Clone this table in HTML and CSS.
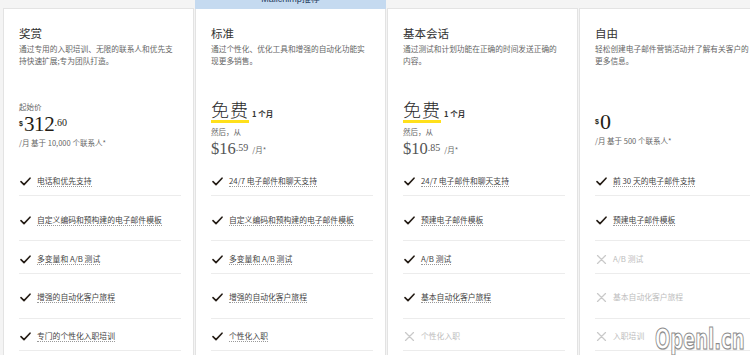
FILE: index.html
```html
<!DOCTYPE html>
<html lang="zh">
<head>
<meta charset="utf-8">
<title>Pricing</title>
<link rel="stylesheet" href="styles.css">
</head>
<body>
<div class="plans">
  <section class="plan">
    <div class="head">
      <h2 class="title">奖赏</h2>
      <p class="desc">通过专用的入职培训、无限的联系人和优先支持快速扩展;专为团队打造。</p>
    </div>
    <div class="price price--paid">
      <div class="small">起始价</div>
      <div class="amount"><span class="cur">$</span><span class="big">312</span><span class="cents">.60</span></div>
      <div class="note">/月 基于 10,000 个联系人*</div>
    </div>
    <ul class="features">
      <li class="on"><svg class="ico" viewBox="0 0 11 9"><path d="M1 4.6 L4 7.6 L10 1.2"/></svg><span class="ft">电话和优先支持</span></li>
      <li class="on"><svg class="ico" viewBox="0 0 11 9"><path d="M1 4.6 L4 7.6 L10 1.2"/></svg><span class="ft">自定义编码和预构建的电子邮件模板</span></li>
      <li class="on"><svg class="ico" viewBox="0 0 11 9"><path d="M1 4.6 L4 7.6 L10 1.2"/></svg><span class="ft">多变量和 A/B 测试</span></li>
      <li class="on"><svg class="ico" viewBox="0 0 11 9"><path d="M1 4.6 L4 7.6 L10 1.2"/></svg><span class="ft">增强的自动化客户旅程</span></li>
      <li class="on"><svg class="ico" viewBox="0 0 11 9"><path d="M1 4.6 L4 7.6 L10 1.2"/></svg><span class="ft">专门的个性化入职培训</span></li>
    </ul>
  </section>

  <section class="plan plan--featured">
    <div class="badge">Mailchimp推荐</div>
    <div class="head">
      <h2 class="title">标准</h2>
      <p class="desc">通过个性化、优化工具和增强的自动化功能实现更多销售。</p>
    </div>
    <div class="price price--trial">
      <div class="free"><span class="free-word">免费</span><span class="trial">1 个月</span></div>
      <div class="small">然后，从</div>
      <div class="after"><span class="mid">$16</span><span class="mid-c">.59</span><span class="per">/月*</span></div>
    </div>
    <ul class="features">
      <li class="on"><svg class="ico" viewBox="0 0 11 9"><path d="M1 4.6 L4 7.6 L10 1.2"/></svg><span class="ft">24/7 电子邮件和聊天支持</span></li>
      <li class="on"><svg class="ico" viewBox="0 0 11 9"><path d="M1 4.6 L4 7.6 L10 1.2"/></svg><span class="ft">自定义编码和预构建的电子邮件模板</span></li>
      <li class="on"><svg class="ico" viewBox="0 0 11 9"><path d="M1 4.6 L4 7.6 L10 1.2"/></svg><span class="ft">多变量和 A/B 测试</span></li>
      <li class="on"><svg class="ico" viewBox="0 0 11 9"><path d="M1 4.6 L4 7.6 L10 1.2"/></svg><span class="ft">增强的自动化客户旅程</span></li>
      <li class="on"><svg class="ico" viewBox="0 0 11 9"><path d="M1 4.6 L4 7.6 L10 1.2"/></svg><span class="ft">个性化入职</span></li>
    </ul>
  </section>

  <section class="plan">
    <div class="head">
      <h2 class="title">基本会话</h2>
      <p class="desc">通过测试和计划功能在正确的时间发送正确的内容。</p>
    </div>
    <div class="price price--trial">
      <div class="free"><span class="free-word">免费</span><span class="trial">1 个月</span></div>
      <div class="small">然后，从</div>
      <div class="after"><span class="mid">$10</span><span class="mid-c">.85</span><span class="per">/月*</span></div>
    </div>
    <ul class="features">
      <li class="on"><svg class="ico" viewBox="0 0 11 9"><path d="M1 4.6 L4 7.6 L10 1.2"/></svg><span class="ft">24/7 电子邮件和聊天支持</span></li>
      <li class="on"><svg class="ico" viewBox="0 0 11 9"><path d="M1 4.6 L4 7.6 L10 1.2"/></svg><span class="ft">预建电子邮件模板</span></li>
      <li class="on"><svg class="ico" viewBox="0 0 11 9"><path d="M1 4.6 L4 7.6 L10 1.2"/></svg><span class="ft">A/B 测试</span></li>
      <li class="on"><svg class="ico" viewBox="0 0 11 9"><path d="M1 4.6 L4 7.6 L10 1.2"/></svg><span class="ft">基本自动化客户旅程</span></li>
      <li class="off"><svg class="ico" viewBox="0 0 11 9"><path d="M1.5 0.5 L9.5 8.5 M9.5 0.5 L1.5 8.5"/></svg><span class="ft">个性化入职</span></li>
    </ul>
  </section>

  <section class="plan">
    <div class="head">
      <h2 class="title">自由</h2>
      <p class="desc">轻松创建电子邮件营销活动并了解有关客户的更多信息。</p>
    </div>
    <div class="price price--free">
      <div class="amount"><span class="cur">$</span><span class="big">0</span></div>
      <div class="note">/月 基于 500 个联系人*</div>
    </div>
    <ul class="features">
      <li class="on"><svg class="ico" viewBox="0 0 11 9"><path d="M1 4.6 L4 7.6 L10 1.2"/></svg><span class="ft">前 30 天的电子邮件支持</span></li>
      <li class="on"><svg class="ico" viewBox="0 0 11 9"><path d="M1 4.6 L4 7.6 L10 1.2"/></svg><span class="ft">预建电子邮件模板</span></li>
      <li class="off"><svg class="ico" viewBox="0 0 11 9"><path d="M1.5 0.5 L9.5 8.5 M9.5 0.5 L1.5 8.5"/></svg><span class="ft">A/B 测试</span></li>
      <li class="off"><svg class="ico" viewBox="0 0 11 9"><path d="M1.5 0.5 L9.5 8.5 M9.5 0.5 L1.5 8.5"/></svg><span class="ft">基本自动化客户旅程</span></li>
      <li class="off"><svg class="ico" viewBox="0 0 11 9"><path d="M1.5 0.5 L9.5 8.5 M9.5 0.5 L1.5 8.5"/></svg><span class="ft">入职培训</span></li>
    </ul>
  </section>
</div>
<div class="watermark">Openl.cn</div>
</body>
</html>
```

FILE: styles.css
```css
* { box-sizing: border-box; }

html, body {
  margin: 0;
  padding: 0;
  height: 100%;
  overflow: hidden;
}

body {
  background: #f4f4f4;
  font-family: "Noto Sans CJK SC", "Noto Sans", sans-serif;
  color: #241c15;
  position: relative;
}

.plans {
  display: flex;
  gap: 1px;
  padding-left: 3px;
  margin-top: -18px;
  align-items: flex-start;
}

.plan {
  flex: 0 0 191px;
  width: 191px;
  margin-top: 26px;
  background: #fff;
  border: 1px solid #e3e3e3;
  height: 400px;
}

.plan--featured {
  margin-top: 0;
  border-top: 0;
}

.badge {
  height: 27px;
  margin: 0 -1px;
  background: #c5daf0;
  color: #1d3b5c;
  font-size: 9px;
  line-height: 12px;
  text-align: center;
  padding-top: 11px;
  font-family: "Liberation Sans", "Noto Sans CJK SC", sans-serif;
}

.head {
  height: 89px;
  padding: 17px 12px 0 15px;
}

.title {
  margin: 0;
  font-size: 11.5px;
  line-height: 14px;
  font-weight: 400;
  color: #333;
}

.desc {
  margin: 3px 0 0;
  font-size: 7.7px;
  line-height: 11.5px;
  color: #666;
  width: 160px;
}

.price {
  height: 62px;
  padding: 0 12px 0 15px;
}

.small {
  font-size: 7.5px;
  line-height: 10px;
  color: #666;
}

.price--paid { padding-top: 4px; }
.price--free { padding-top: 12px; }

.amount {
  display: flex;
  align-items: flex-start;
  height: 26px;
  font-family: "Liberation Serif", serif;
  color: #241c15;
}

.cur {
  font-size: 7px;
  line-height: 7px;
  margin-top: 8px;
  margin-right: 1px;
  font-family: "Liberation Sans", sans-serif;
  font-weight: 700;
}

.big {
  font-size: 21px;
  line-height: 24px;
  letter-spacing: -0.3px;
}

.price--free .big {
  font-size: 22px;
}

.cents {
  font-size: 10px;
  line-height: 12px;
  margin-top: 5px;
}

.note {
  font-size: 7.5px;
  line-height: 10px;
  color: #666;
}

.price--trial { padding-top: 0; }

.free {
  display: flex;
  align-items: flex-end;
  height: 25px;
}

.free-word {
  font-size: 18px;
  line-height: 21px;
  font-weight: 300;
  color: #2b2b2b;
  letter-spacing: 1px;
  border-bottom: 3px solid #ffe01b;
}

.trial {
  font-size: 7.5px;
  font-weight: 700;
  line-height: 10px;
  margin-left: 3px;
  margin-bottom: 4px;
  color: #333;
}

.price--trial .small { margin-top: 4px; }

.after {
  display: flex;
  align-items: flex-start;
  margin-top: 3px;
  font-family: "Liberation Serif", serif;
  color: #555;
}

.mid {
  font-size: 16.5px;
  line-height: 18px;
}

.mid-c {
  font-size: 10px;
  line-height: 12px;
  margin-top: 2px;
}

.per {
  font-family: "Noto Sans CJK SC", sans-serif;
  font-size: 7.5px;
  line-height: 10px;
  margin-top: 5px;
  margin-left: 4px;
  color: #666;
}

.features {
  list-style: none;
  margin: 0 12px 0 15px;
  padding: 0;
}

.features li {
  display: flex;
  align-items: center;
  border-bottom: 1px solid #ececec;
  font-size: 7.8px;
  line-height: 10px;
}

.features li:nth-child(1) { padding: 16px 0 8px; }
.features li:nth-child(2) { padding: 19px 0 14px; }
.features li:nth-child(3) { padding: 13px 0 8px; }
.features li:nth-child(4) { padding: 18px 0 15px; }
.features li:nth-child(5) { padding: 12px 0 8px; }

.ico {
  width: 11px;
  height: 9px;
  flex: 0 0 11px;
  margin-left: 1px;
  margin-right: 6px;
  fill: none;
  stroke-linecap: round;
  stroke-linejoin: round;
}

.on .ico { stroke: #241c15; stroke-width: 1.6; }
.off .ico { stroke: #c9c9c9; stroke-width: 1.2; }

.ft {
  line-height: 10px;
  border-bottom: 1px solid transparent;
}

.on .ft {
  color: #444;
  border-bottom: 1px dotted #9a9a9a;
}

.off .ft { color: #bdbdbd; }

.watermark {
  position: absolute;
  right: 5px;
  bottom: 0;
  font-family: "DejaVu Sans", sans-serif;
  font-size: 29px;
  line-height: 32px;
  font-weight: 700;
  color: #fff;
  -webkit-text-stroke: 1.2px #8c8c8c;
  transform: scaleX(0.62);
  transform-origin: right bottom;
  text-shadow: 1px 1px 1px rgba(0,0,0,0.15);
}
```
